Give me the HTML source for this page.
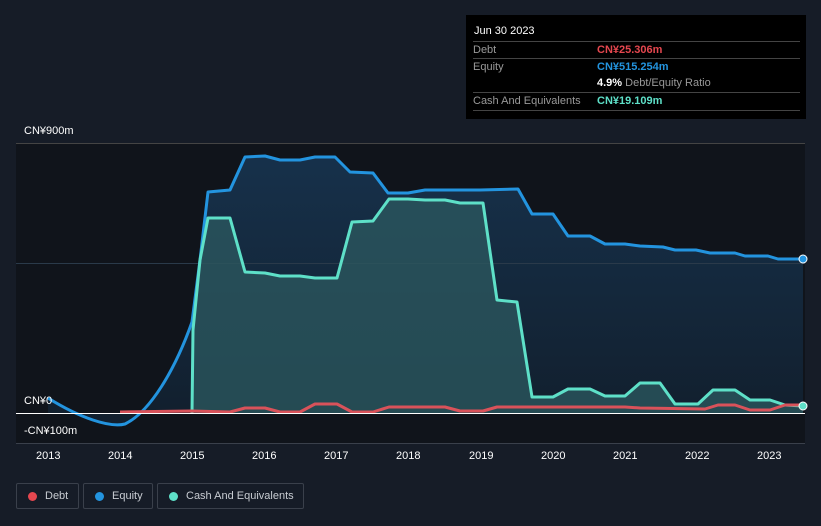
<!DOCTYPE html><html><head><style>
body{margin:0;width:821px;height:526px;background:#161c27;font-family:"Liberation Sans",sans-serif;overflow:hidden;position:relative}
.t{position:absolute;color:#fff;font-size:11px}
.lg{position:absolute;top:483px;height:26px;border:1px solid #3a404b;border-radius:2px;box-sizing:border-box;color:#c8ccd2;font-size:11px;line-height:24px;padding-left:28px}
.lg i{position:absolute;left:11px;top:8px;width:9px;height:9px;border-radius:50%}
#tip{position:absolute;left:466px;top:15px;width:340px;height:104px;background:#000;font-size:11px;color:#fff}
#tip .r{position:absolute;left:7px;width:327px;border-top:1px solid #444;height:17px;line-height:17px;color:#999}
#tip .r b{position:absolute;left:124px;font-weight:bold}
</style></head><body>
<svg width="821" height="526" style="position:absolute;left:0;top:0">
<defs><linearGradient id="g" x1="0" y1="0" x2="0" y2="1"><stop offset="0" stop-color="#173450"/><stop offset="1" stop-color="#12202f"/></linearGradient></defs>
<rect x="16" y="143" width="789" height="300" fill="#10141b"/>
<line x1="16" y1="143.5" x2="805" y2="143.5" stroke="#444"/>
<path d="M48,398 C80,418 110,428 125,424 C150,412 175,370 192,322 L200,260 L208,192 L230,190 L245,157 L265,156 L280,160 L300,160 L315,157 L335,157 L350,172 L373,173 L388,193 L408,193 L425,190 L480,190 L518,189 L532,214 L553,214 L568,236 L590,236 L605,244 L625,244 L640,246 L663,247 L675,250 L696,250 L710,253 L735,253 L745,256 L768,256 L778,259 L803,259 L803,413 L48,413Z" fill="url(#g)" opacity="0.9"/>
<line x1="16" y1="263.5" x2="805" y2="263.5" stroke="#2a3a4a"/>
<path d="M192,413 L193,330 L200,260 L208,218 L230,218 L245,272 L265,273 L280,276 L300,276 L315,278 L337,278 L352,222 L373,221 L389,199 L408,199 L425,200 L445,200 L460,203 L483,203 L497,300 L517,302 L532,397 L553,397 L568,389 L590,389 L605,396 L625,396 L640,383 L660,383 L675,404 L698,404 L713,390 L735,390 L750,400 L770,400 L785,405 L803,406 L803,413Z" fill="#2c5a60" opacity="0.75"/>
<path d="M48,398 C80,418 110,428 125,424 C150,412 175,370 192,322 L200,260 L208,192 L230,190 L245,157 L265,156 L280,160 L300,160 L315,157 L335,157 L350,172 L373,173 L388,193 L408,193 L425,190 L480,190 L518,189 L532,214 L553,214 L568,236 L590,236 L605,244 L625,244 L640,246 L663,247 L675,250 L696,250 L710,253 L735,253 L745,256 L768,256 L778,259 L803,259" fill="none" stroke="#2394df" stroke-width="3" stroke-linejoin="round"/>
<path d="M192,413 L193,330 L200,260 L208,218 L230,218 L245,272 L265,273 L280,276 L300,276 L315,278 L337,278 L352,222 L373,221 L389,199 L408,199 L425,200 L445,200 L460,203 L483,203 L497,300 L517,302 L532,397 L553,397 L568,389 L590,389 L605,396 L625,396 L640,383 L660,383 L675,404 L698,404 L713,390 L735,390 L750,400 L770,400 L785,405 L803,406" fill="none" stroke="#5ee0c8" stroke-width="3" stroke-linejoin="round"/>
<path d="M120,412 L192,411 L230,412 L245,408 L265,408 L280,412 L300,412 L315,404 L337,404 L352,412 L373,412 L389,407 L445,407 L460,411 L483,411 L497,407 L625,407 L640,408 L705,409 L718,405 L735,405 L750,410 L770,410 L785,405 L803,405" fill="none" stroke="#d9525a" stroke-width="3" stroke-linejoin="round"/>
<line x1="16" y1="413.5" x2="805" y2="413.5" stroke="#fff"/>
<line x1="16" y1="443.5" x2="805" y2="443.5" stroke="#3a404b"/>
<circle cx="803" cy="259" r="4" fill="#2394df" stroke="#fff"/>
<circle cx="803" cy="406" r="4" fill="#5ee0c8" stroke="#fff"/>
</svg>
<div class="t" style="left:24px;top:125px">CN¥900m</div>
<div class="t" style="left:24px;top:395px">CN¥0</div>
<div class="t" style="left:24px;top:425px">-CN¥100m</div>
<div class="t" style="left:36px;top:450px">2013</div><div class="t" style="left:108px;top:450px">2014</div><div class="t" style="left:180px;top:450px">2015</div><div class="t" style="left:252px;top:450px">2016</div><div class="t" style="left:324px;top:450px">2017</div><div class="t" style="left:396px;top:450px">2018</div><div class="t" style="left:469px;top:450px">2019</div><div class="t" style="left:541px;top:450px">2020</div><div class="t" style="left:613px;top:450px">2021</div><div class="t" style="left:685px;top:450px">2022</div><div class="t" style="left:757px;top:450px">2023</div>
<div class="lg" style="left:16px;width:63px"><i style="background:#e5474f"></i>Debt</div>
<div class="lg" style="left:83px;width:70px"><i style="background:#2394df"></i>Equity</div>
<div class="lg" style="left:157px;width:147px"><i style="background:#5ee0c8"></i>Cash And Equivalents</div>
<div id="tip">
<div style="position:absolute;left:8px;top:10px">Jun 30 2023</div>
<div class="r" style="top:26px">Debt<b style="color:#e5474f">CN¥25.306m</b></div>
<div class="r" style="top:43px">Equity<b style="color:#2394df">CN¥515.254m</b></div>
<div class="r" style="top:60px;border:0"><b style="color:#fff">4.9% <span style="color:#999;font-weight:normal">Debt/Equity Ratio</span></b></div>
<div class="r" style="top:77px">Cash And Equivalents<b style="color:#5ee0c8">CN¥19.109m</b></div>
<div class="r" style="top:95px;height:0"></div>
</div>
</body></html>
